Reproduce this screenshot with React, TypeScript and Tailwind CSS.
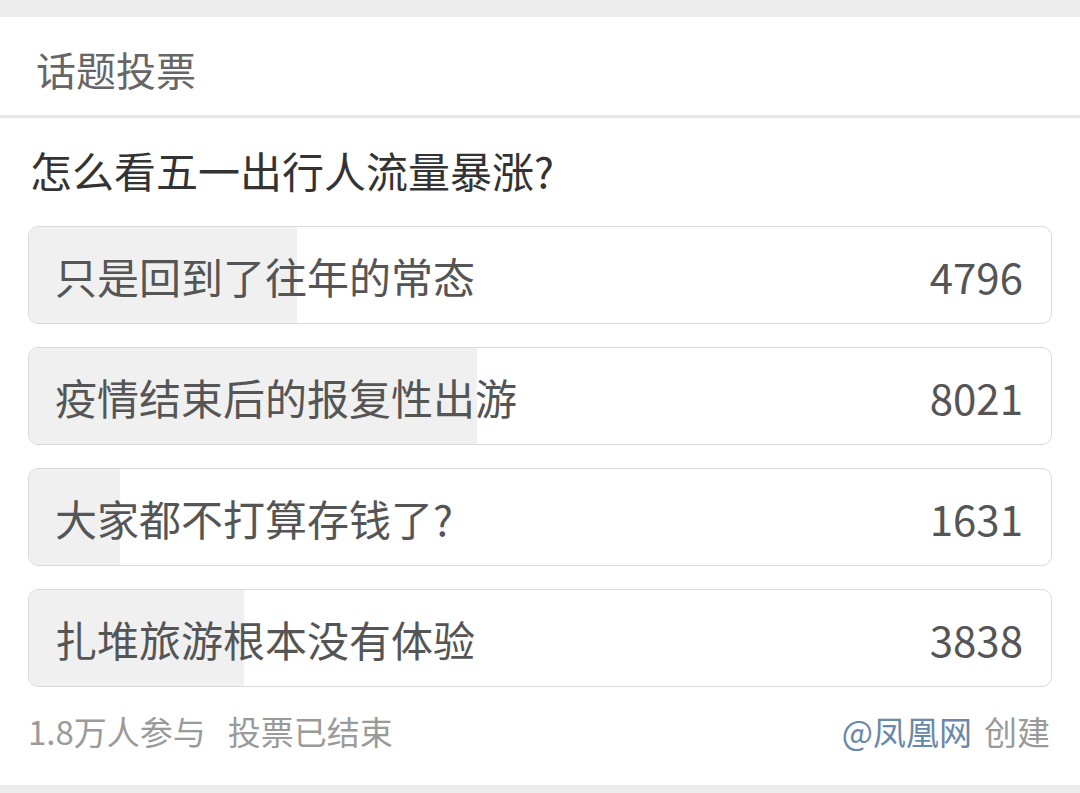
const options = [
  { label: "只是回到了往年的常态", count: 4796 },
  { label: "疫情结束后的报复性出游", count: 8021 },
  { label: "大家都不打算存钱了?", count: 1631 },
  { label: "扎堆旅游根本没有体验", count: 3838 },
];

const total = options.reduce((sum, o) => sum + o.count, 0);

export default function App() {
  return (
    <div
      className="flex h-[793px] w-full flex-col overflow-hidden bg-[#ececec]"
      style={{ fontFamily: '"Noto Sans CJK SC", "Noto Sans", sans-serif' }}
    >
      <div className="h-[17px] shrink-0" />

      <div className="flex h-[98px] shrink-0 items-center bg-white px-[36px] pt-[6px] text-[40px] text-[#666]">
        话题投票
      </div>

      <div className="h-[3px] shrink-0 bg-[#e6e6e6]" />

      <div className="flex shrink-0 flex-col bg-white px-[28px] pt-[23px] pb-[30px]">
        <h1 className="h-[58px] pl-[2px] text-[42px] leading-[58px] text-[#333]">
          怎么看五一出行人流量暴涨?
        </h1>

        <div className="mt-[27px] flex flex-col gap-[23px]">
          {options.map((o) => (
            <div
              key={o.label}
              className="relative flex h-[98px] shrink-0 items-center justify-between overflow-hidden rounded-[10px] border border-[#d9d9d9] bg-white pl-[26px] pr-[28px]"
            >
              <div
                className="absolute inset-y-0 left-0 bg-[#f0f0f0]"
                style={{ width: `${(o.count / total) * 100}%` }}
              />
              <span className="relative text-[42px] text-[#555]">{o.label}</span>
              <span className="relative text-[42px] text-[#555]">{o.count}</span>
            </div>
          ))}
        </div>

        <div className="mt-[22px] flex h-[46px] items-center justify-between text-[33px] text-[#9a9a9a]">
          <div className="flex items-center gap-[22px]">
            <span>1.8万人参与</span>
            <span>投票已结束</span>
          </div>
          <div className="flex items-center gap-[12px] pr-[2px]">
            <span className="text-[#6a88a8]">@凤凰网</span>
            <span>创建</span>
          </div>
        </div>
      </div>
    </div>
  );
}
